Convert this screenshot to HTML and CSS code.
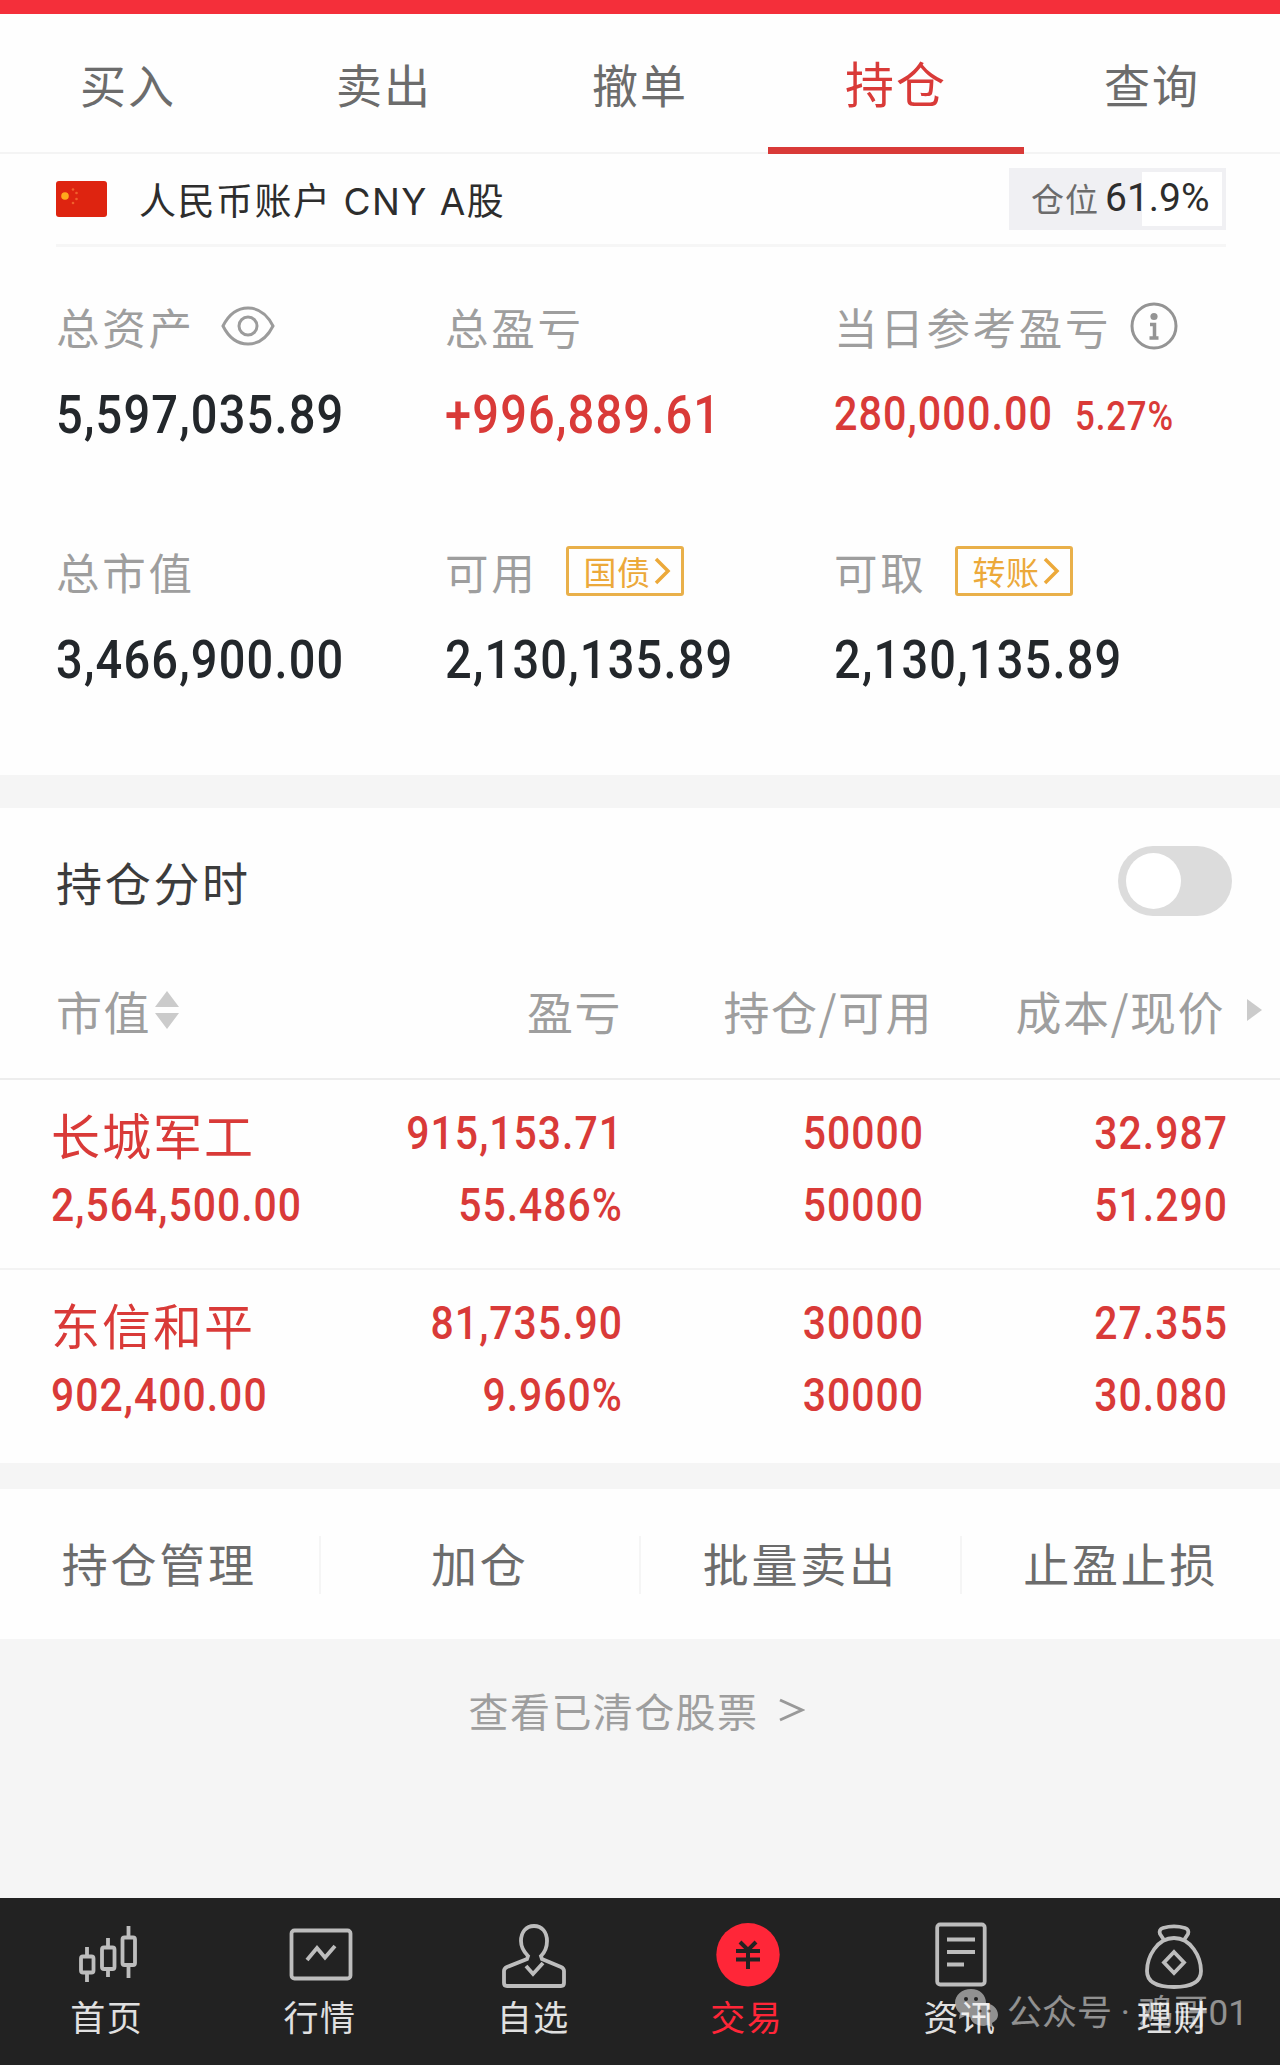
FILE: index.html
```html
<!DOCTYPE html>
<html lang="zh-CN">
  <head>
    <meta charset="UTF-8" />
    <meta name="viewport" content="width=device-width, initial-scale=1.0" />
    <title>持仓</title>
    <link rel="stylesheet" href="styles.css">
  </head>
  <body>
    <div class="status-strip"></div>

    <nav class="tabs">
      <a class="tab">买入</a>
      <a class="tab">卖出</a>
      <a class="tab">撤单</a>
      <a class="tab active">持仓</a>
      <a class="tab">查询</a>
    </nav>

    <section class="account">
      <div class="account-bar">
        <svg class="flag" viewBox="0 0 51 36">
          <rect width="51" height="36" rx="3" fill="#de2410" />
          <circle cx="9" cy="15" r="3.800" fill="#ffa81c" />
          <g fill="#f0602c">
            <circle cx="17" cy="8.500" r="1.300" />
            <circle cx="20.500" cy="12" r="1.300" />
            <circle cx="20.500" cy="18" r="1.300" />
            <circle cx="17" cy="22" r="1.300" />
          </g>
        </svg>
        <span class="account-name">人民币账户 CNY A股</span>
        <div class="position"><span class="position-label">仓位</span><span class="position-value">61.9%</span></div>
      </div>

      <div class="stats">
        <div class="stat">
          <div class="label">总资产
            <svg class="eye" viewBox="0 0 54 40" fill="none" stroke="#9b9b9b" stroke-width="3">
              <path d="M2 20C8 8 17 2 27 2s19 6 25 18c-6 12-15 18-25 18S8 32 2 20z" />
              <circle cx="27" cy="20" r="9" />
            </svg>
          </div>
          <div class="value"><span class="num">5,597,035.89</span></div>
        </div>
        <div class="stat">
          <div class="label">总盈亏</div>
          <div class="value red"><span class="num">+996,889.61</span></div>
        </div>
        <div class="stat">
          <div class="label">当日参考盈亏
            <svg class="info" viewBox="0 0 48 48" fill="none" stroke="#949494" stroke-width="3">
              <circle cx="24" cy="24" r="22" />
              <circle cx="24" cy="14.500" r="3.600" fill="#949494" stroke="none" />
              <path d="M20 22.500h4.500V36M19.500 36h9" stroke-width="3.500" />
            </svg>
          </div>
          <div class="value red today"><span class="num">280,000.00</span><span class="num percent">5.27%</span></div>
        </div>
        <div class="stat">
          <div class="label">总市值</div>
          <div class="value"><span class="num">3,466,900.00</span></div>
        </div>
        <div class="stat">
          <div class="label">可用
            <span class="chip">国债<svg viewBox="0 0 17 28"><path d="M2 2l12 12L2 26" /></svg></span>
          </div>
          <div class="value"><span class="num">2,130,135.89</span></div>
        </div>
        <div class="stat">
          <div class="label">可取
            <span class="chip">转账<svg viewBox="0 0 17 28"><path d="M2 2l12 12L2 26" /></svg></span>
          </div>
          <div class="value"><span class="num">2,130,135.89</span></div>
        </div>
      </div>
    </section>

    <section class="holdings">
      <div class="holdings-title">
        <span>持仓分时</span>
        <div class="switch"></div>
      </div>

      <div class="row head">
        <div class="col-name">市值
          <svg class="sort" viewBox="0 0 24 38"><path d="M12 0l12 16H0zM12 38l12-16H0z" fill="#cbcbcb" /></svg>
        </div>
        <div class="col-profit">盈亏</div>
        <div class="col-amount">持仓/可用</div>
        <div class="col-price">成本/现价</div>
        <svg class="more" viewBox="0 0 15 22"><path d="M0 0l15 11L0 22z" fill="#cbcbcb" /></svg>
      </div>

      <div class="row stock">
        <div class="col-name"><span class="stock-name">长城军工</span><span class="num">2,564,500.00</span></div>
        <div class="col-profit"><span class="num">915,153.71</span><span class="num">55.486%</span></div>
        <div class="col-amount"><span class="num">50000</span><span class="num">50000</span></div>
        <div class="col-price"><span class="num">32.987</span><span class="num">51.290</span></div>
      </div>
      <div class="row stock">
        <div class="col-name"><span class="stock-name">东信和平</span><span class="num">902,400.00</span></div>
        <div class="col-profit"><span class="num">81,735.90</span><span class="num">9.960%</span></div>
        <div class="col-amount"><span class="num">30000</span><span class="num">30000</span></div>
        <div class="col-price"><span class="num">27.355</span><span class="num">30.080</span></div>
      </div>
    </section>

    <section class="actions">
      <a class="action">持仓管理</a>
      <a class="action">加仓</a>
      <a class="action">批量卖出</a>
      <a class="action">止盈止损</a>
    </section>

    <div class="cleared">查看已清仓股票<svg viewBox="0 0 26 26"><path d="M1 3l22 10L1 23" /></svg></div>

    <footer class="bottom-nav">
      <a class="nav-item">
        <svg viewBox="0 0 72 70">
          <path d="M16 27v9M16 53v9M37 18v9M37 49v8M57.500 6v11M57.500 45v13" />
          <rect x="10" y="36.500" width="12.500" height="16" rx="2" />
          <rect x="31" y="27.500" width="12.500" height="21.500" rx="2" />
          <rect x="51.500" y="17.500" width="12.500" height="27.500" rx="2" />
        </svg>
        首页
      </a>
      <a class="nav-item">
        <svg viewBox="0 0 72 70">
          <rect x="7.500" y="10.500" width="59" height="48" rx="3" />
          <path d="M23 40l10-12 8 9.500L51 26" />
        </svg>
        行情
      </a>
      <a class="nav-item">
        <svg viewBox="0 0 72 70">
          <g transform="translate(1 2)">
            <path d="M30 34c-4-4-7-9-7-15 0-9 5-15 13-15s13 6 13 15c0 6-2 11-6 15l1 3 19 8c2 1 3 2 3 4v12c0 2-1 3-3 3H9c-2 0-3-1-3-3V49c0-2 1-3 3-4l20-8z" />
            <path d="M28 44l7 8 10-11" />
          </g>
        </svg>
        自选
      </a>
      <a class="nav-item active">
        <svg viewBox="0 0 72 70">
          <circle cx="37" cy="34.700" r="31.700" fill="#ff2638" stroke="none" />
          <path d="M29 22l8 8 8-8M25 31h24M25 39.500h24M37 30v19" stroke="#222" stroke-width="4" />
        </svg>
        交易
      </a>
      <a class="nav-item">
        <svg viewBox="0 0 72 70">
          <rect x="13.200" y="4.500" width="47.500" height="60" rx="3" />
          <path d="M23 19.500h28M23 32h28M23 44.500h17" stroke-width="4" />
        </svg>
        资讯
      </a>
      <a class="nav-item">
        <svg viewBox="0 0 72 70">
          <g transform="translate(1 2)">
            <path d="M26 18l-4-6c-1-3 0-5 3-6 7-2 15-2 22 0 3 1 4 3 3 6l-4 6" />
            <path d="M36 16C19 16 9 35 9 49c0 11 9 16 27 16s27-5 27-16c0-14-10-33-27-33z" />
            <path d="M36 30l10 10.500L36 51 26 40.500z" />
          </g>
        </svg>
        理财
      </a>
    </footer>

    <div class="watermark">
      <svg viewBox="0 0 44 40">
        <path d="M16 0C7 0 0 6 0 14c0 4 2 8 5 10l-1 6 6-3c2 .6 4 1 6 1 9 0 15-6 15-14S25 0 16 0z" />
        <path d="M29 14c-8 0-14 5-14 12s6 11 14 11l4-1 5 3-1-5c4-2 6-5 6-8 0-7-6-12-14-12z" />
        <g fill="#222"><circle cx="11" cy="10" r="2" /><circle cx="21" cy="10" r="2" /><circle cx="25" cy="22" r="1.600" /><circle cx="34" cy="22" r="1.600" /></g>
      </svg>
      <span>公众号 · 鸡哥01</span>
    </div>
  </body>
</html>
```
FILE: styles.css
```css
* {
  box-sizing: border-box;
}

body {
  margin: 0;
  height: 2065px;
  display: flex;
  flex-direction: column;
  background-color: #f5f5f5;
  font-family: "Noto Sans CJK SC", sans-serif;
  position: relative;
  overflow: hidden;
}

.status-strip {
  height: 14px;
  background-color: #f42f3a;
}

/* Top tabs */
.tabs {
  display: flex;
  height: 140px;
  background-color: #fefefe;
  border-bottom: 2px solid #f4f4f4;
}

.tab {
  flex: 1;
  height: 140px;
  text-align: center;
  font-size: 46px;
  letter-spacing: 2px;
  line-height: 138px;
  color: #6c6c6c;
}

.tab.active {
  font-size: 49px;
  line-height: 136px;
  color: #d93a38;
  border-bottom: 7px solid #d93a38;
}

/* Account */
.account {
  height: 621px;
  padding: 0 54px 0 56px;
  background-color: #fefefe;
}

.account-bar {
  display: flex;
  align-items: center;
  height: 93px;
  border-bottom: 3px solid #f6f6f6;
}

.flag {
  width: 51px;
  height: 36px;
}

.account-name {
  margin-left: 32px;
  font-family: Inter, "Noto Sans CJK SC", sans-serif;
  font-size: 37px;
  letter-spacing: 1.5px;
  color: #2d2d2d;
}

.position {
  display: flex;
  align-items: center;
  width: 217px;
  height: 62px;
  margin-left: auto;
  padding-left: 18px;
  padding-bottom: 2px;
  border: 4px solid #f0f0f3;
  background: linear-gradient(to right, #f0f0f3 129px, #fff 129px);
  white-space: nowrap;
}

.position-label {
  font-size: 33px;
  letter-spacing: 1px;
  color: #6c6c6c;
}

.position-value {
  margin-left: 6px;
  font-family: Roboto, sans-serif;
  font-size: 39px;
  color: #2d2d2d;
}

.stats {
  display: grid;
  grid-template-columns: 389px 389px 1fr;
  grid-template-rows: 245px 245px;
  padding-top: 51px;
}

.label {
  display: flex;
  align-items: center;
  height: 56px;
  font-size: 43.5px;
  letter-spacing: 2.7px;
  color: #9e9e9e;
  white-space: nowrap;
}

.eye {
  width: 54px;
  height: 40px;
  margin-left: 26px;
}

.info {
  width: 48px;
  height: 48px;
  margin-left: 19px;
}

.chip {
  display: flex;
  align-items: center;
  width: 118px;
  height: 50px;
  margin-left: 29px;
  padding-left: 14px;
  border: 3px solid #e9b04a;
  border-radius: 3px;
  font-size: 33px;
  letter-spacing: 0.5px;
  color: #eca93a;
}

.chip svg {
  width: 17px;
  height: 28px;
  margin-left: 4px;
  fill: none;
  stroke: #eca93a;
  stroke-width: 3.5;
}

.num {
  display: inline-block;
  font-family: Roboto, sans-serif;
  font-weight: 500;
  letter-spacing: 0.025em;
  transform: scaleX(0.87);
  transform-origin: left center;
  white-space: nowrap;
}

.value {
  height: 64px;
  margin-top: 24px;
  font-size: 54px;
  line-height: 64px;
  color: #23272b;
}

.value.red {
  color: #d93a38;
}

.value.today {
  font-size: 47.5px;
}

.percent {
  margin-left: -11px;
  font-size: 40px;
}

/* Holdings */
.holdings {
  height: 655px;
  margin-top: 33px;
  background-color: #fefefe;
}

.holdings-title {
  display: flex;
  align-items: center;
  justify-content: space-between;
  height: 146px;
  padding: 0 48px 0 56px;
  font-size: 46px;
  letter-spacing: 2.7px;
  color: #3c3c3c;
}

.switch {
  width: 114px;
  height: 70px;
  border-radius: 35px;
  padding: 7px 8px;
  background-color: #dcdcdc;
}

.switch::before {
  content: "";
  display: block;
  width: 55px;
  height: 56px;
  border-radius: 50%;
  background-color: #fff;
}

.row {
  display: grid;
  grid-template-columns: 300px 270px 300px 304px 1fr;
}

.col-profit,
.col-amount,
.col-price {
  text-align: right;
}

.head {
  height: 126px;
  align-items: center;
  padding-left: 56px;
  padding-bottom: 12px;
  border-bottom: 2px solid #ededed;
  font-size: 46px;
  letter-spacing: 1.5px;
  color: #9e9e9e;
}

.head .col-name {
  display: flex;
  align-items: center;
}

.head .col-profit {
  margin-right: 4px;
}

.head .col-amount {
  margin-right: -7px;
}

.head .col-price {
  margin-right: 5px;
}

.sort {
  width: 24px;
  height: 38px;
  margin-left: 4px;
}

.more {
  width: 15px;
  height: 22px;
  margin-left: 17px;
}

.stock {
  height: 188px;
  padding: 17px 0 0 51px;
  grid-template-columns: 304px 268px 301px 304px;
  font-size: 47px;
  color: #d93a38;
}

.stock + .stock {
  border-top: 2px solid #f3f3f3;
}

.stock > div {
  display: flex;
  flex-direction: column;
}

.stock .num {
  height: 72px;
  line-height: 72px;
}

.stock-name {
  height: 72px;
  font-size: 49px;
  letter-spacing: 2px;
  line-height: 74px;
}

.stock .col-profit .num,
.stock .col-amount .num,
.stock .col-price .num {
  transform-origin: right center;
}

/* Actions */
.actions {
  display: flex;
  align-items: center;
  height: 150px;
  margin-top: 26px;
  padding-top: 2px;
  background-color: #fefefe;
}

.action {
  flex: 1;
  height: 58px;
  line-height: 52px;
  text-align: center;
  font-size: 46px;
  letter-spacing: 2.7px;
  color: #6c6c6c;
}

.action + .action {
  border-left: 2px solid #f5f5f5;
}

.cleared {
  display: flex;
  align-items: center;
  justify-content: center;
  height: 141px;
  padding-right: 6px;
  font-size: 40px;
  letter-spacing: 1.4px;
  color: #9e9e9e;
}

.cleared svg {
  width: 26px;
  height: 26px;
  margin-left: 21px;
  fill: none;
  stroke: #999;
  stroke-width: 3;
}

/* Bottom navigation */
.bottom-nav {
  display: flex;
  height: 167px;
  margin-top: auto;
  padding-top: 22px;
  background-color: #222;
}

.nav-item {
  flex: 1;
  display: flex;
  flex-direction: column;
  align-items: center;
  font-size: 35px;
  letter-spacing: 1.5px;
  line-height: 51px;
  color: #e0e0e0;
}

.nav-item svg {
  width: 72px;
  height: 70px;
  fill: none;
  stroke: #bdbdbd;
  stroke-width: 3.8;
}

.nav-item.active {
  color: #ff2638;
}

.watermark {
  position: absolute;
  left: 955px;
  top: 1984px;
  display: flex;
  align-items: center;
  height: 50px;
  font-family: Roboto, "Noto Sans CJK SC", sans-serif;
  font-size: 35px;
  color: #fff;
  opacity: 0.5;
  white-space: nowrap;
}

.watermark svg {
  width: 44px;
  height: 40px;
  margin-right: 8px;
  fill: #fff;
}
```
